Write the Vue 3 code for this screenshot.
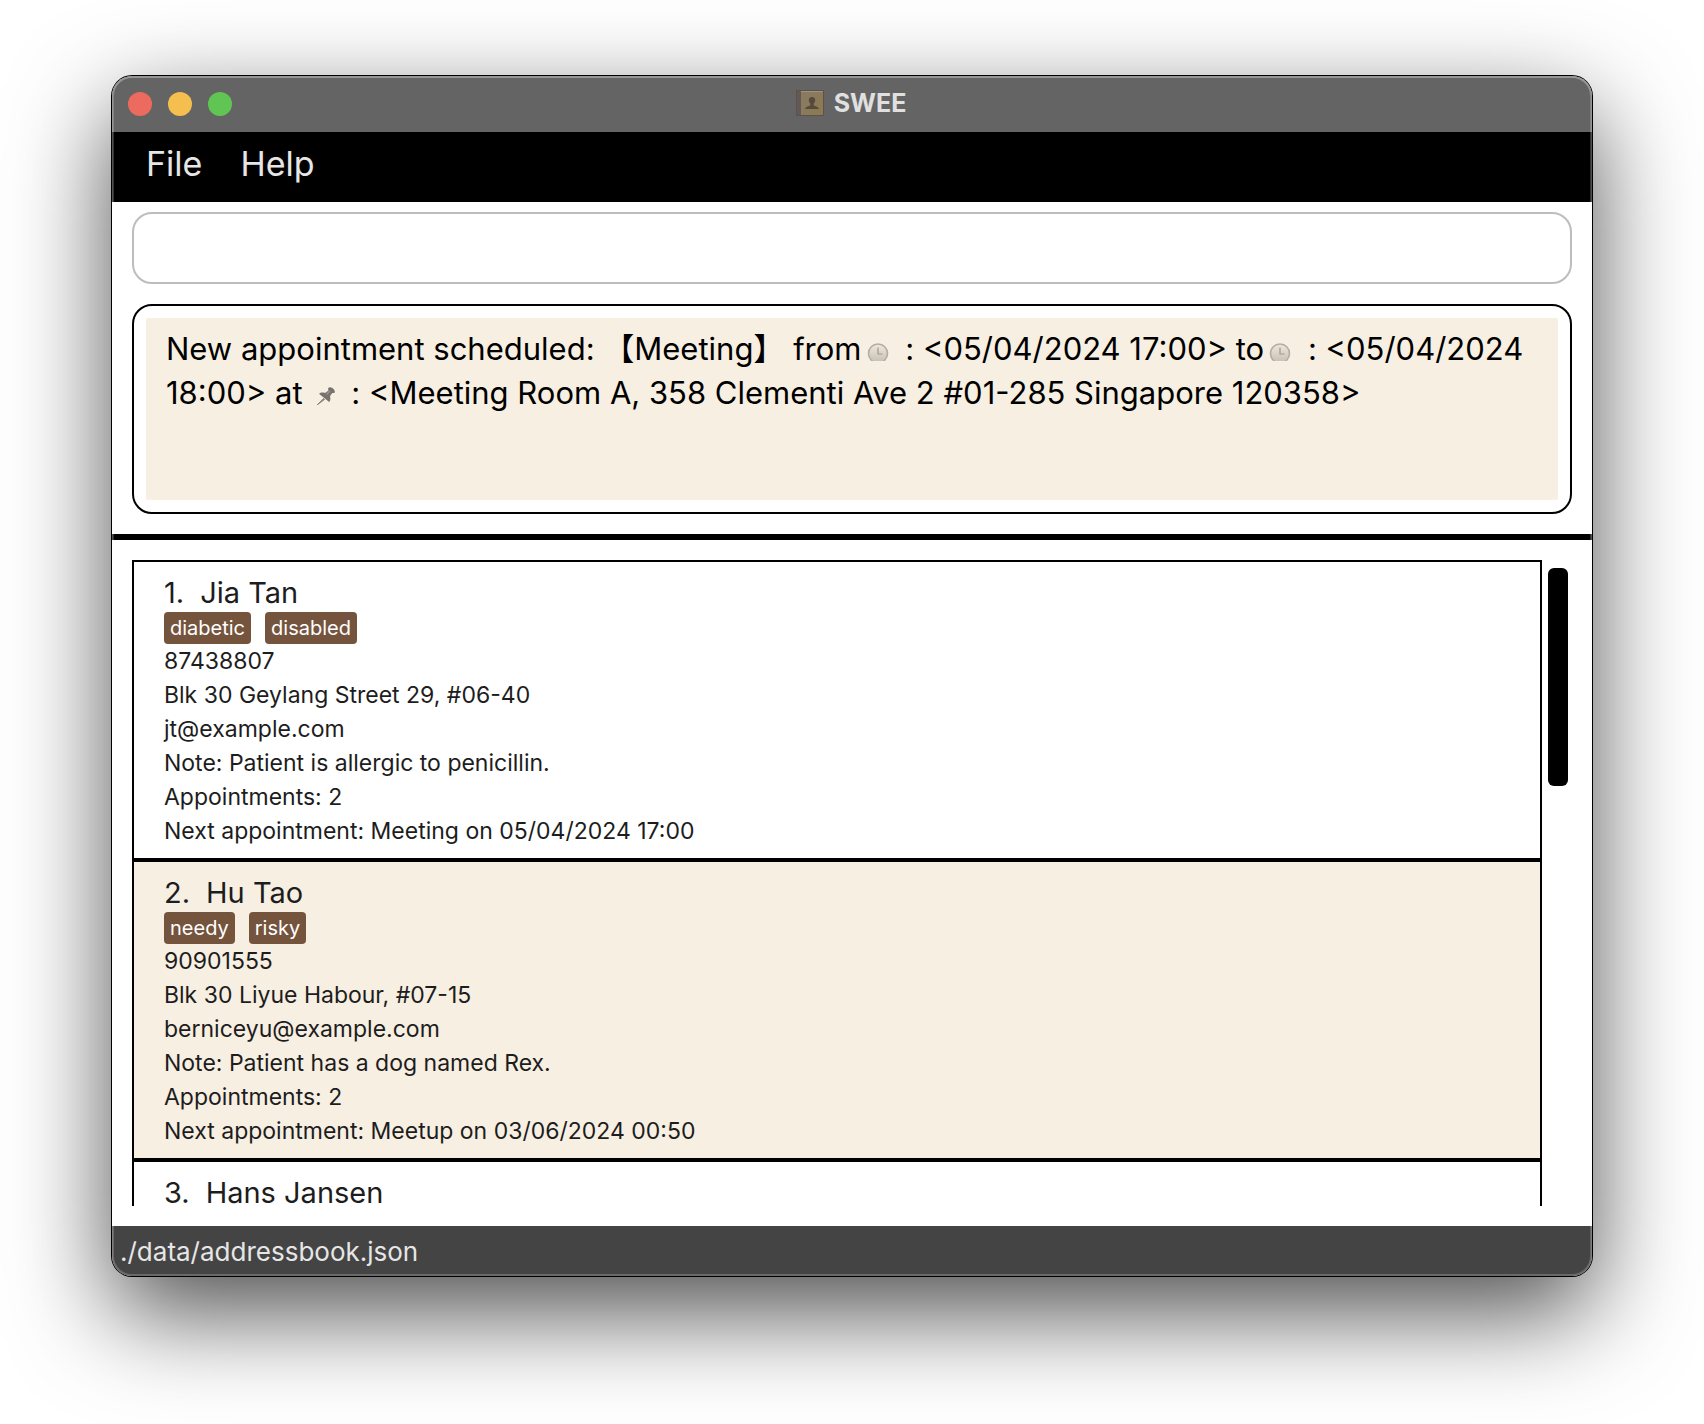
<script setup>
import { ref } from 'vue'

const command = ref('')

const menus = ['File', 'Help']

const patients = [
  {
    name: 'Jia Tan',
    tags: ['diabetic', 'disabled'],
    details: [
      '87438807',
      'Blk 30 Geylang Street 29, #06-40',
      'jt@example.com',
      'Note: Patient is allergic to penicillin.',
      'Appointments: 2',
      'Next appointment: Meeting on 05/04/2024 17:00',
    ],
  },
  {
    name: 'Hu Tao',
    tags: ['needy', 'risky'],
    details: [
      '90901555',
      'Blk 30 Liyue Habour, #07-15',
      'berniceyu@example.com',
      'Note: Patient has a dog named Rex.',
      'Appointments: 2',
      'Next appointment: Meetup on 03/06/2024 00:50',
    ],
  },
  { name: 'Hans Jansen', tags: [], details: [] },
]
</script>

<template>
  <div class="desktop">
    <main class="window">
      <header class="titlebar">
        <div class="lights">
          <button class="light close" type="button" aria-label="Close"></button>
          <button class="light minimise" type="button" aria-label="Minimise"></button>
          <button class="light zoom" type="button" aria-label="Zoom"></button>
        </div>
        <h1 class="title">
          <svg class="book" viewBox="0 0 28 26" aria-hidden="true">
            <rect x="0" y="0" width="28" height="26" rx="1" fill="#5a524b" />
            <rect x="1" y="1" width="4" height="24" fill="#615955" />
            <rect x="5" y="1" width="22" height="24" fill="#8b7b5e" />
            <rect x="5" y="1" width="22" height="1" fill="#a0947c" />
            <path d="M5 25L27 2V25Z" fill="#8f7a4e" opacity="0.4" />
            <path
              d="M16 7c-2.200 0-3.400 1.500-3.200 3.400.1 1.400.7 2.500 1.500 3.200v1.600c-.8 1-4.800 1.100-5.300 3.800h14c-.5-2.700-4.500-2.800-5.300-3.800v-1.600c.8-.7 1.400-1.800 1.500-3.200C19.400 8.500 18.200 7 16 7Z"
              fill="#554a3b"
            />
          </svg>
          SWEE
        </h1>
      </header>

      <nav class="menubar">
        <button v-for="menu in menus" :key="menu" class="menu" type="button">{{ menu }}</button>
      </nav>

      <section class="console">
        <input v-model="command" class="command" type="text" aria-label="Command" />
        <div class="result">
          <p class="message">
            New appointment scheduled: 【Meeting】 from<svg class="clock" viewBox="0 0 22 18" aria-hidden="true">
              <defs>
                <linearGradient id="face" x1="0" y1="0" x2="0" y2="1">
                  <stop offset="0" stop-color="#efe8dc" />
                  <stop offset="1" stop-color="#c5beb3" />
                </linearGradient>
              </defs>
              <circle cx="11" cy="10.500" r="9.500" fill="url(#face)" stroke="#b4ada3" stroke-width="1.600" />
              <path d="M11 4.500V11H15.500" fill="none" stroke="#a0998f" stroke-width="1.200" />
            </svg> : &lt;05/04/2024 17:00&gt; to<svg class="clock" viewBox="0 0 22 18" aria-hidden="true">
              <circle cx="11" cy="10.500" r="9.500" fill="url(#face)" stroke="#b4ada3" stroke-width="1.600" />
              <path d="M11 4.500V11H15.500" fill="none" stroke="#a0998f" stroke-width="1.200" />
            </svg> : &lt;05/04/2024 18:00&gt; at<svg class="pin" viewBox="0 0 18 18" aria-hidden="true">
              <path d="M6.500 11.500L0 18l7.500-5.500Z" fill="#8d8881" stroke="#8d8881" stroke-width="1" />
              <path
                d="M11.500 .8c.8-1 2.500-.8 3.800.2 1.500 1.100 2.800 2.800 2.500 4.200-.4 1-1.600 1-2.500.7l-2.300 3c.6 2.200.5 4.500-.8 6L2 6.800c1.700-1.500 4-1.500 6-.8L11.500 3.500c-.4-1-.6-1.900 0-2.700Z"
                fill="#77726b"
              />
              <path d="M9.500 7.500L13 4" stroke="#9b958c" stroke-width="1.500" />
            </svg> : &lt;Meeting Room A, 358 Clementi Ave 2 #01-285 Singapore 120358&gt;
          </p>
        </div>
      </section>

      <section class="browser">
        <ol class="patients">
          <li v-for="(patient, i) in patients" :key="patient.name" class="patient">
            <h2 class="name"><span>{{ i + 1 }}.</span><span>{{ patient.name }}</span></h2>
            <div v-if="patient.tags.length" class="tags">
              <span v-for="tag in patient.tags" :key="tag" class="tag">{{ tag }}</span>
            </div>
            <p v-for="line in patient.details" :key="line" class="detail">{{ line }}</p>
          </li>
        </ol>
        <div class="track"><div class="thumb"></div></div>
      </section>

      <footer class="status">./data/addressbook.json</footer>
    </main>
  </div>
</template>

<style>
body {
  margin: 0;
  background: #fff;
}
</style>

<style scoped>
.desktop {
  box-sizing: border-box;
  display: flex;
  height: 100vh;
  padding: 76px 112px 148px;
  overflow: hidden;
  font-family: Inter, "Noto Sans CJK SC", sans-serif;
}

.window {
  position: relative;
  display: flex;
  flex: 1;
  flex-direction: column;
  min-width: 0;
  border-radius: 20px;
  overflow: hidden;
  background: #fff;
  box-shadow: 0 0 0 1px #000, 0 36px 100px rgba(0, 0, 0, 0.7);
}

/* light bevel that runs round the inside of the window frame */
.window::after {
  content: "";
  position: absolute;
  inset: 0;
  border-radius: 20px;
  box-shadow: inset 0 0 0 2px rgba(255, 255, 255, 0.2), inset 0 1px 0 1px rgba(255, 255, 255, 0.15);
  pointer-events: none;
}

.titlebar {
  display: grid;
  grid-template-columns: 1fr auto 1fr;
  align-items: center;
  height: 56px;
  padding: 0 18px 0 16px;
  background: #646464;
}

.lights {
  display: flex;
  gap: 16px;
}

.light {
  width: 24px;
  height: 24px;
  padding: 0;
  border: 0;
  border-radius: 50%;
}

.close {
  background: #ed6a5e;
}

.minimise {
  background: #f5bf4f;
}

.zoom {
  background: #61c554;
}

.title {
  display: flex;
  align-items: center;
  gap: 10px;
  margin: 0;
  padding-bottom: 2px;
  color: #e0e0e0;
  font-size: 25px;
  font-weight: 700;
  line-height: 32px;
}

.book {
  width: 28px;
  height: 26px;
}

.menubar {
  display: flex;
  align-items: center;
  gap: 38px;
  height: 64px;
  padding: 0 34px 6px;
  background: #000;
}

.menu {
  padding: 0;
  border: 0;
  background: none;
  color: #e6e6e6;
  font: inherit;
  font-size: 34px;
  line-height: 44px;
}

.console {
  display: flex;
  flex-direction: column;
  gap: 20px;
  padding: 10px 20px 20px;
  border-bottom: 6px solid #000;
}

.command {
  box-sizing: border-box;
  width: 100%;
  height: 72px;
  padding: 0 20px;
  border: 2px solid #bdbdbd;
  border-radius: 20px;
  background: #fff;
  font: inherit;
  font-size: 31px;
  outline: none;
}

.result {
  padding: 12px;
  border: 2px solid #000;
  border-radius: 20px;
}

.message {
  box-sizing: border-box;
  min-height: 182px;
  margin: 0;
  padding: 9px 16px 9px 20px;
  border-radius: 2px;
  background: #f7efe2;
  color: #000;
  font-size: 31px;
  line-height: 44px;
}

.clock {
  width: 22px;
  height: 18px;
  margin: 0 8px 0 5px;
  vertical-align: -1px;
}

.pin {
  width: 18px;
  height: 18px;
  margin: 0 8px 0 14px;
  vertical-align: -1px;
}

.browser {
  display: flex;
  flex: 1;
  min-height: 0;
  padding: 20px;
}

.patients {
  flex: 1;
  margin: 0;
  padding: 0;
  border: 2px solid #000;
  border-bottom: 0;
  list-style: none;
  overflow: hidden;
}

.patient {
  padding: 18px 30px 10px;
  border-bottom: 4px solid #000;
  color: #1d1d1d;
}

.patient:nth-child(even) {
  background: #f7efe2;
}

.name {
  display: flex;
  gap: 16px;
  margin: 0 0 6px;
  font-size: 29px;
  font-weight: 400;
  line-height: 26px;
}

.tags {
  display: flex;
  gap: 14px;
}

.tag {
  padding: 0 6px;
  border-radius: 4px;
  background: #75543d;
  color: #fff;
  font-size: 20px;
  line-height: 32px;
}

.detail {
  margin: 0;
  font-size: 23px;
  line-height: 34px;
}

.track {
  width: 20px;
  padding: 8px 4px 0 6px;
}

.thumb {
  height: 218px;
  border-radius: 6px;
  background: #000;
}

.status {
  height: 48px;
  padding: 2px 8px 0;
  background: #444;
  color: #e6e6e6;
  font-size: 26px;
  line-height: 48px;
}
</style>
